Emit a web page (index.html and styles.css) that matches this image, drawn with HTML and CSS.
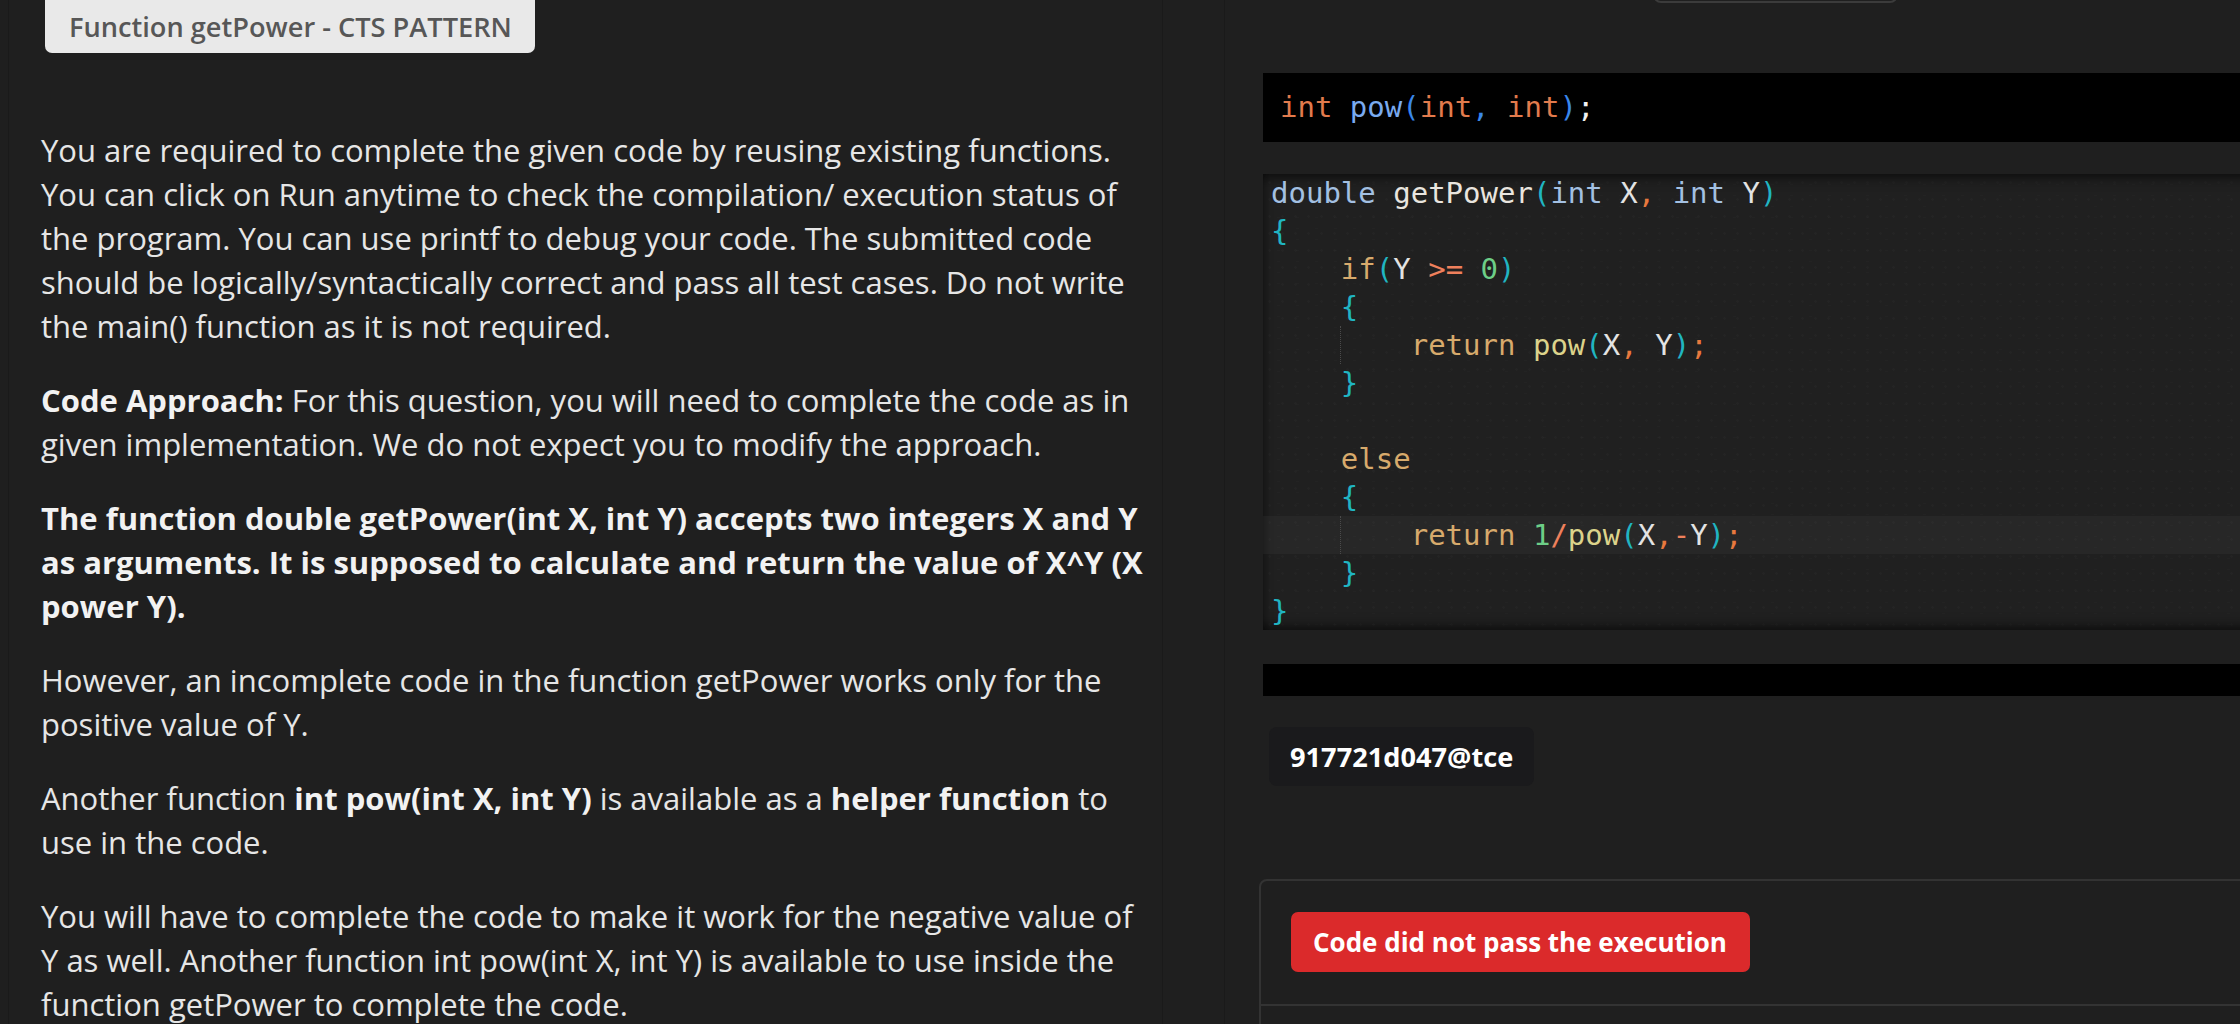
FILE: index.html
```html
<!DOCTYPE html>
<html lang="en">
<head>
<meta charset="utf-8">
<title>Function getPower - CTS PATTERN</title>
<link rel="stylesheet" href="styles.css">
</head>
<body>
<div class="app">
  <section class="left">
    <div class="tab">Function getPower - CTS PATTERN</div>
    <div class="question">
      <p>You are required to complete the given code by reusing existing functions. You can click on Run anytime to check the compilation/ execution status of the program. You can use printf to debug your code. The submitted code should be logically/syntactically correct and pass all test cases. Do not write the main() function as it is not required.</p>
      <p><b>Code Approach:</b> For this question, you will need to complete the code as in given implementation. We do not expect you to modify the approach.</p>
      <p><b>The function double getPower(int X, int Y) accepts two integers X and Y as arguments. It is supposed to calculate and return the value of X^Y (X power Y).</b></p>
      <p>However, an incomplete code in the function getPower works only for the positive value of Y.</p>
      <p>Another function <b>int pow(int X, int Y)</b> is available as a <b>helper function</b> to use in the code.</p>
      <p>You will have to complete the code to make it work for the negative value of Y as well. Another function int pow(int X, int Y) is available to use inside the function getPower to complete the code.</p>
    </div>
  </section>
  <div class="gutter"></div>
  <section class="right">
    <div class="topbar"><div class="lang-select"></div></div>
    <div class="header-code"><span class="h-type">int</span> <span class="h-fn">pow</span><span class="h-p">(</span><span class="h-type">int</span><span class="h-p">,</span> <span class="h-type">int</span><span class="h-p">)</span><span class="h-semi">;</span></div>
    <div class="editor">
      <div class="line"><span class="t">double</span> <span class="f">getPower</span><span class="p">(</span><span class="t">int</span> <span class="v">X</span><span class="c">,</span> <span class="t">int</span> <span class="v">Y</span><span class="p">)</span></div>
      <div class="line"><span class="p">{</span></div>
      <div class="line">    <span class="k">if</span><span class="p">(</span><span class="v">Y</span> <span class="o">&gt;=</span> <span class="n">0</span><span class="p">)</span></div>
      <div class="line">    <span class="p">{</span></div>
      <div class="line">    <span class="guide">    </span><span class="k">return</span> <span class="y">pow</span><span class="p">(</span><span class="v">X</span><span class="c">,</span> <span class="v">Y</span><span class="p">)</span><span class="c">;</span></div>
      <div class="line">    <span class="p">}</span></div>
      <div class="line"> </div>
      <div class="line">    <span class="k">else</span></div>
      <div class="line">    <span class="p">{</span></div>
      <div class="line active">    <span class="guide">    </span><span class="k">return</span> <span class="n">1</span><span class="o">/</span><span class="y">pow</span><span class="p">(</span><span class="v">X</span><span class="c">,</span><span class="o">-</span><span class="v">Y</span><span class="p">)</span><span class="c">;</span></div>
      <div class="line">    <span class="p">}</span></div>
      <div class="line"><span class="p">}</span></div>
    </div>
    <div class="footer-code"></div>
    <div class="user-badge">917721d047@tce</div>
    <div class="result-card">
      <div class="result-head">
        <span class="status-fail">Code did not pass the execution</span>
      </div>
      <div class="result-body"></div>
    </div>
  </section>
</div>
</body>
</html>
```
FILE: styles.css
```css
* { box-sizing: border-box; }
html, body { margin: 0; padding: 0; }
body {
  background: #1f1f1f;
  width: 2240px;
  height: 1024px;
  overflow: hidden;
  font-family: "Open Sans", "Noto Sans", sans-serif;
  color: #e6e6e6;
}
.app {
  display: flex;
  height: 1024px;
}
.left {
  margin-left: 8px;
  width: 1155px;
  border-left: 1px solid #1a1a1a;
  border-right: 1px solid #1a1a1a;
  padding-left: 32px;
  flex-shrink: 0;
}
.tab {
  margin-left: 4px;
  width: 490px;
  height: 53px;
  background: #e9e9e9;
  border-radius: 0 0 7px 7px;
  color: #575757;
  font-weight: 600;
  font-size: 27.2px;
  line-height: 53px;
  padding-left: 24px;
  white-space: nowrap;
}
.question {
  margin-top: 75px;
  width: 1112px;
  font-size: 31px;
  line-height: 44px;
}
.question p { margin: 0 0 30px; }
.question b { font-weight: 700; color: #f2f2f2; }
.gutter {
  width: 61px;
  flex-shrink: 0;
}
.right {
  flex: 1;
  border-left: 1px solid #1a1a1a;
  padding-left: 38px;
  overflow: hidden;
  min-width: 0;
}
.topbar {
  display: flow-root;
  height: 73px;
}
.lang-select {
  margin-left: 390px;
  margin-top: -30px;
  width: 245px;
  height: 33px;
  border: 2px solid #3b3b3b;
  border-radius: 8px;
}
.header-code {
  height: 69px;
  background: #000;
  padding-left: 17px;
  font-family: "DejaVu Sans Mono", monospace;
  font-size: 29px;
  line-height: 69px;
  white-space: pre;
  margin-right: -20px;
}
.h-type { color: #e27b4d; }
.h-fn { color: #79aaf0; }
.h-p { color: #3a87ea; }
.h-semi { color: #f2f2f2; }
.editor {
  margin-top: 32px;
  height: 456px;
  background-color: #202020;
  background-image:
    radial-gradient(rgba(255,255,255,0.018) 1px, transparent 1.3px),
    radial-gradient(rgba(255,255,255,0.014) 1px, transparent 1.3px);
  background-size: 13px 17px, 19px 11px;
  background-position: 0 0, 6px 5px;
  box-shadow: inset 0 12px 12px -8px rgba(0,0,0,0.55), inset 0 -12px 12px -8px rgba(0,0,0,0.55), inset 8px 0 10px -8px rgba(0,0,0,0.5);
  font-family: "DejaVu Sans Mono", monospace;
  font-size: 29px;
  margin-right: -20px;
}
.line {
  height: 38px;
  line-height: 38px;
  padding-left: 8px;
  white-space: pre;
  color: #e3e3e3;
}
.line.active { background: rgba(255,255,255,0.035); }
.guide {
  display: inline-block;
  height: 38px;
  vertical-align: top;
  border-left: 1px dotted #4a4a4a;
  margin-left: -1px;
}
.t { color: #a3c0e2; }
.f { color: #e9e5df; }
.p { color: #20b5c2; }
.v { color: #e3e3e3; }
.c { color: #e8793e; }
.k { color: #d7aa6c; }
.o { color: #ef805c; }
.n { color: #6dce87; }
.y { color: #dcd38b; }
.footer-code {
  margin-top: 34px;
  height: 32px;
  background: #000;
  margin-right: -20px;
}
.user-badge {
  margin-top: 31px;
  margin-left: 6px;
  display: inline-block;
  height: 59px;
  line-height: 59px;
  padding: 0 21px;
  background: #1a1a1c;
  border-radius: 8px;
  color: #fff;
  font-weight: 700;
  font-size: 27.2px;
}
.result-card {
  margin-top: 93px;
  margin-left: -4px;
  margin-right: -20px;
  border: 2px solid #333;
  border-radius: 8px 8px 0 0;
  height: 300px;
}
.result-head {
  padding: 31px 0 32px 30px;
  border-bottom: 2px solid #333;
}
.status-fail {
  display: inline-block;
  height: 60px;
  line-height: 60px;
  padding: 0 23px 0 22px;
  background: #db2a2b;
  border-radius: 7px;
  color: #fff;
  font-weight: 700;
  font-size: 26px;
}
```
